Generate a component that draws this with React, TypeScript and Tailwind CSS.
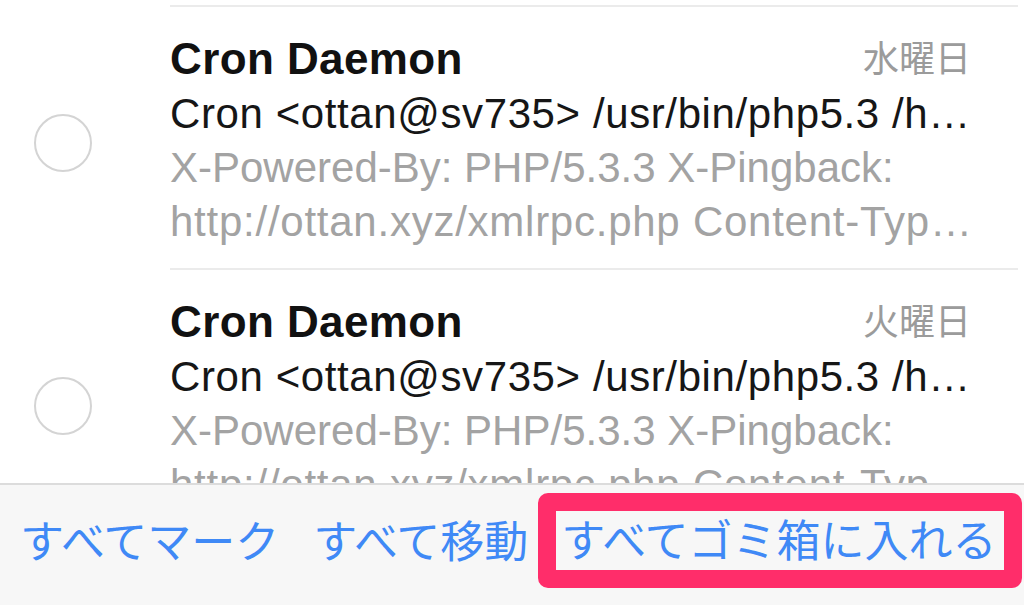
const font = "font-['Liberation_Sans','Noto_Sans_CJK_JP',sans-serif]";

const mails = [
  {
    from: "Cron Daemon",
    date: "水曜日",
    subject: "Cron <ottan@sv735> /usr/bin/php5.3 /h…",
    preview1: "X-Powered-By: PHP/5.3.3 X-Pingback:",
    preview2: "http://ottan.xyz/xmlrpc.php Content-Typ…",
  },
  {
    from: "Cron Daemon",
    date: "火曜日",
    subject: "Cron <ottan@sv735> /usr/bin/php5.3 /h…",
    preview1: "X-Powered-By: PHP/5.3.3 X-Pingback:",
    preview2: "http://ottan.xyz/xmlrpc.php Content-Typ…",
  },
];

function Separator() {
  return <div className="ml-[170px] mr-[6px] h-[2px] bg-[#ebebeb]" />;
}

export default function App() {
  return (
    <div className={`relative h-[605px] w-[1024px] overflow-hidden bg-white ${font}`}>
      <div className="pt-[5px]">
        {mails.map((m, i) => (
          <div key={i}>
            <Separator />
            <div className="flex">
              {/* 選択サークル */}
              <div className="flex w-[170px] flex-shrink-0 items-center pl-[34px]">
                <div className="mt-[10px] h-[58px] w-[58px] rounded-full border-2 border-[#d4d4d4]" />
              </div>
              <div className="min-w-0 flex-1 pt-[23px] pb-[19px] pr-[53px]">
                <div className="flex items-baseline justify-between">
                  <span className="text-[44px] leading-[56px] font-bold tracking-[0.4px] text-[#111]">{m.from}</span>
                  <span className="relative -top-[2px] font-['Noto_Sans_CJK_JP',sans-serif] text-[36px] leading-[56px] text-[#9b9b9b]">
                    {m.date}
                  </span>
                </div>
                <div className="whitespace-nowrap text-[42px] leading-[54px] tracking-[0.6px] text-[#161616]">{m.subject}</div>
                <div className="whitespace-nowrap text-[42px] leading-[54px] text-[#a3a3a3]">{m.preview1}</div>
                <div className="whitespace-nowrap text-[42px] leading-[54px] tracking-[0.75px] text-[#a3a3a3]">{m.preview2}</div>
              </div>
            </div>
          </div>
        ))}
      </div>

      {/* 下部ツールバー */}
      <div className="absolute inset-x-0 top-[483px] bottom-0 flex items-start border-t-2 border-[#dcdcdc] bg-[#f7f7f7] pl-[20px] pt-[8px] font-['Noto_Sans_CJK_JP',sans-serif] text-[44px] text-[#3f89f6]">
        <div className="flex h-[95px] flex-shrink-0 items-center pb-[4px]">すべてマーク</div>
        <div className="ml-[34px] flex h-[95px] flex-shrink-0 items-center pb-[4px]">すべて移動</div>
        <div className="ml-[10px] flex h-[95px] w-[484px] flex-shrink-0 items-center rounded-[10px] border-[18px] border-[#ff2d6a] pl-[5px] pb-[4px] leading-[55px]">
          すべてゴミ箱に入れる
        </div>
      </div>
    </div>
  );
}
